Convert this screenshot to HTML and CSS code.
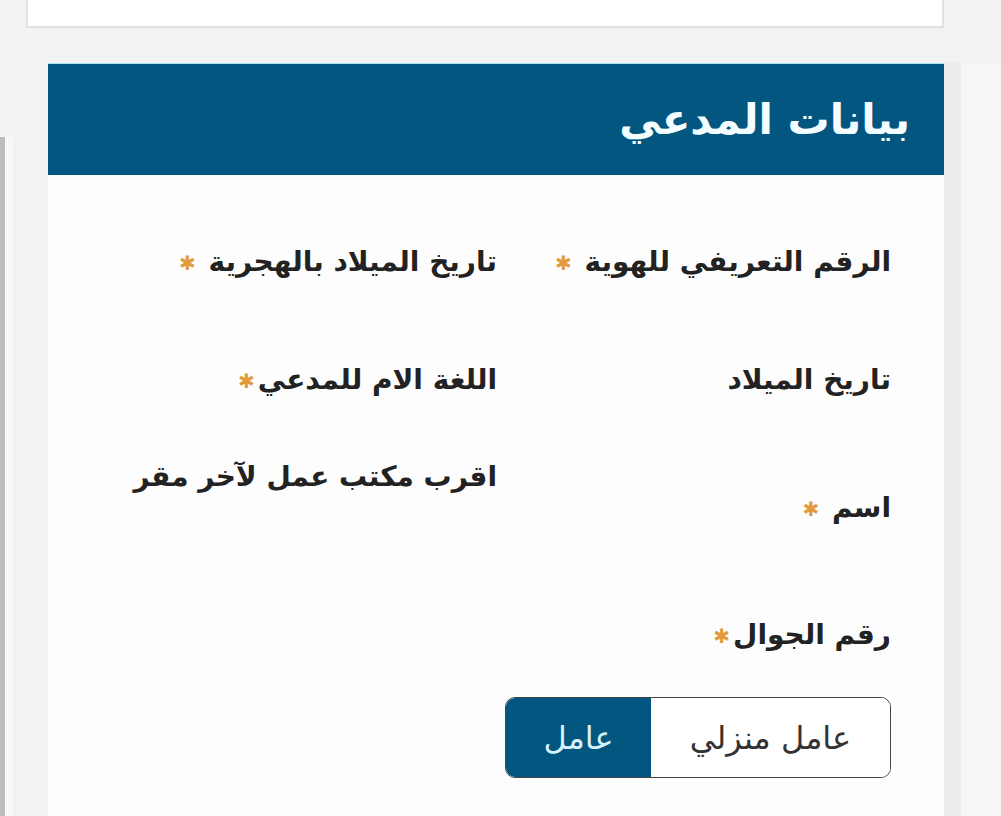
FILE: index.html
```html
<!DOCTYPE html>
<html lang="ar">
  <head>
    <meta charset="UTF-8" />
    <meta name="viewport" content="width=device-width, initial-scale=1.0" />
    <title>بيانات المدعي</title>
    <link rel="stylesheet" href="styles.css">
  </head>
  <body>
    <div class="top-card"></div>
    <div class="main">
      <div class="gutter">
        <div class="scroll-strip"></div>
        <div class="light-strip"></div>
      </div>
      <div class="panel" dir="rtl">
        <div class="panel-head">
          <h2>بيانات المدعي</h2>
        </div>
        <div class="panel-body">
          <div class="col col-right">
            <div class="field">الرقم التعريفي للهوية <span class="req">✱</span></div>
            <div class="field">تاريخ الميلاد</div>
            <div class="field field-name">اسم <span class="req">✱</span></div>
            <div class="field field-phone">رقم الجوال<span class="req">✱</span></div>
            <div class="toggle">
              <button type="button" class="toggle-opt">عامل منزلي</button>
              <button type="button" class="toggle-opt active">عامل</button>
            </div>
          </div>
          <div class="col col-left">
            <div class="field">تاريخ الميلاد بالهجرية <span class="req">✱</span></div>
            <div class="field">اللغة الام للمدعي<span class="req">✱</span></div>
            <div class="field field-office">اقرب مكتب عمل لآخر مقر</div>
          </div>
        </div>
      </div>
      <div class="right-edge"></div>
      <div class="right-fill"></div>
    </div>
  </body>
</html>
```

FILE: styles.css
```css
body {
  margin: 0;
  background-color: #f2f2f4;
  font-family: "DejaVu Sans", sans-serif;
  color: #222;
  overflow: hidden;
}

.top-card {
  margin-left: 26px;
  width: 918px;
  height: 28px;
  box-sizing: border-box;
  background-color: #fff;
  border: 2px solid #e2e2e4;
  border-top: none;
}

.main {
  display: flex;
  margin-top: 35px;
}

.gutter {
  width: 48px;
  display: flex;
  padding-top: 74px;
}

.scroll-strip {
  width: 5px;
  height: 700px;
  background-color: #bcbcbc;
}

.light-strip {
  width: 8px;
  height: 700px;
  background-color: #f7f7f7;
}

.panel {
  width: 896px;
  height: 760px;
  background-color: #fdfdfd;
}

.right-edge {
  width: 17px;
  height: 760px;
  background-color: #ececee;
}

.right-fill {
  flex: 1;
  height: 760px;
  background-color: #f6f6f7;
}

.panel-head {
  height: 111px;
  background-color: #03567f;
  border-top: 1px solid #a8e4f2;
  display: flex;
  align-items: center;
  padding-right: 34px;
}

.panel-head h2 {
  margin: 0;
  color: #f4fdff;
  font-size: 42px;
  font-weight: bold;
}

.panel-body {
  display: flex;
  padding-right: 53px;
  padding-top: 67px;
}

.col {
  display: flex;
  flex-direction: column;
}

.col-right {
  width: 386px;
}

.col-left {
  padding-right: 8px;
}

.field {
  height: 40px;
  line-height: 40px;
  font-size: 28px;
  font-weight: bold;
  margin-bottom: 78px;
  white-space: nowrap;
}

.req {
  color: #e39a3a;
  font-size: 20px;
  margin-right: 3px;
  vertical-align: middle;
}

.field-name {
  margin-top: 10px;
  margin-bottom: 87px;
}

.field-phone {
  margin-bottom: 42px;
}

.field-office {
  margin-top: -21px;
}

.toggle {
  display: flex;
  height: 81px;
  border: 1.5px solid #444;
  border-radius: 10px;
  overflow: hidden;
  box-sizing: border-box;
}

.toggle-opt {
  flex: 1;
  border: none;
  background-color: #fff;
  color: #333;
  font-family: "DejaVu Sans", sans-serif;
  font-size: 32px;
  padding: 0;
}

.toggle-opt.active {
  flex: 0 0 145px;
  background-color: #03567f;
  color: #d6f2fa;
}
```
